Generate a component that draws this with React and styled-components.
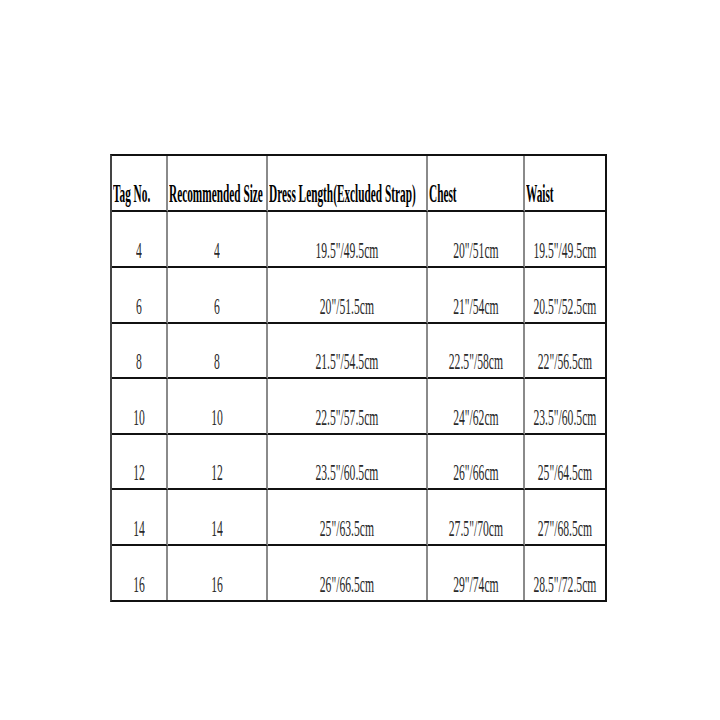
import React from "react";
import styled, { createGlobalStyle } from "styled-components";

const Global = createGlobalStyle`
  html, body { margin: 0; padding: 0; background: #fff; }
  body { font-family: "Liberation Serif", "Times New Roman", serif; }
`;

const Page = styled.div`
  width: 720px;
  height: 720px;
  padding: 154px 0 0 110px;
  box-sizing: border-box;
  background: #fff;
`;

const Table = styled.div`
  display: grid;
  grid-template-columns: 56px 100px 160px 97px 80px;
  grid-template-rows: 56px 56px 56px 55px 56px 55px 56px 54px;
  width: max-content;
  border-top: 2px solid #111;
  border-left: 2px solid #444;
  border-right: 2px solid #111;
  border-bottom: 2px solid #111;
`;

const Cell = styled.div`
  box-sizing: border-box;
  display: flex;
  align-items: flex-end;
  justify-content: ${(p) => (p.$head ? "flex-start" : "center")};
  padding: 0 0 4px ${(p) => (p.$head ? "1px" : "0")};
  border-right: ${(p) => (p.$lastCol ? "none" : "2px solid #8a8a8a")};
  border-bottom: ${(p) => (p.$lastRow ? "none" : "2px solid #111")};
  overflow: visible;
  white-space: nowrap;
  min-width: 0;
`;

const Text = styled.span`
  display: inline-block;
  font-size: ${(p) => (p.$head ? "25px" : "24px")};
  line-height: 24px;
  font-weight: ${(p) => (p.$head ? 700 : 400)};
  color: ${(p) => (p.$head ? "#000" : "#2a2a2a")};
  transform: scaleX(${(p) => (p.$head ? 0.452 : 0.485)});
  transform-origin: ${(p) => (p.$head ? "left bottom" : "center bottom")};
`;

const headers = ["Tag No.", "Recommended Size", "Dress Length(Excluded Strap)", "Chest", "Waist"];
const rows = [
  ["4", "4", '19.5"/49.5cm', '20"/51cm', '19.5"/49.5cm'],
  ["6", "6", '20"/51.5cm', '21"/54cm', '20.5"/52.5cm'],
  ["8", "8", '21.5"/54.5cm', '22.5"/58cm', '22"/56.5cm'],
  ["10", "10", '22.5"/57.5cm', '24"/62cm', '23.5"/60.5cm'],
  ["12", "12", '23.5"/60.5cm', '26"/66cm', '25"/64.5cm'],
  ["14", "14", '25"/63.5cm', '27.5"/70cm', '27"/68.5cm'],
  ["16", "16", '26"/66.5cm', '29"/74cm', '28.5"/72.5cm'],
];

export default function App() {
  return (
    <>
      <Global />
      <Page>
        <Table>
          {headers.map((h, i) => (
            <Cell key={h} $head $lastCol={i === 4}>
              <Text $head>{h}</Text>
            </Cell>
          ))}
          {rows.map((r, ri) =>
            r.map((v, ci) => (
              <Cell key={ri + "-" + ci} $lastCol={ci === 4} $lastRow={ri === rows.length - 1}>
                <Text>{v}</Text>
              </Cell>
            ))
          )}
        </Table>
      </Page>
    </>
  );
}
